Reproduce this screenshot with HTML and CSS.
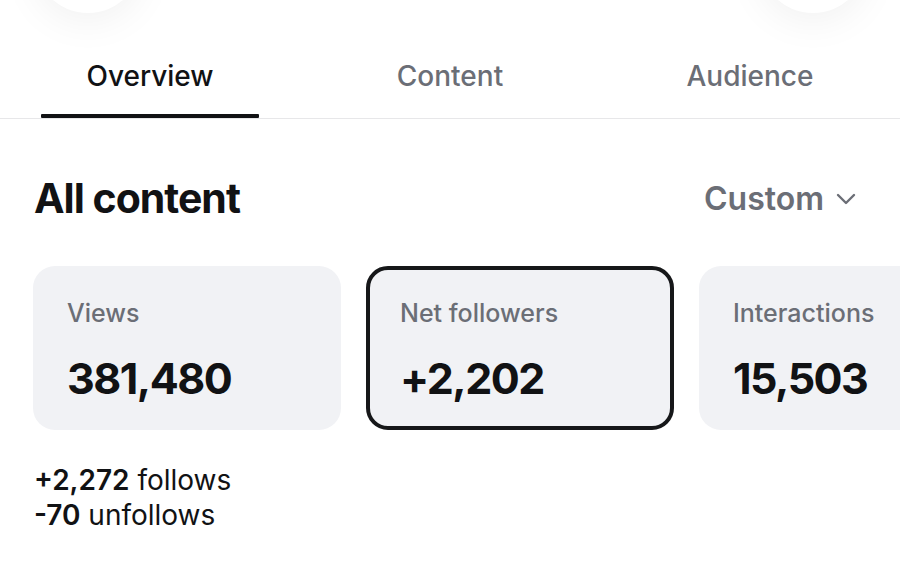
FILE: index.html
```
<!DOCTYPE html>
<html lang="en">
  <head>
    <meta charset="UTF-8" />
    <meta name="viewport" content="width=device-width, initial-scale=1.0" />
    <title>Insights</title>
    <link rel="stylesheet" href="styles.css">
  </head>
  <body>
    <div id="app">
      <div class="top-buttons">
        <div class="round-btn"></div>
        <div class="round-btn"></div>
      </div>

      <nav class="tabs">
        <div class="tab active">Overview</div>
        <div class="tab">Content</div>
        <div class="tab">Audience</div>
      </nav>

      <div class="section-head">
        <h1 class="section-title">All content</h1>
        <div class="range-picker">
          Custom
          <svg class="chevron" viewBox="0 0 20 12" width="20" height="12">
            <path d="M2 2 L10 10 L18 2" fill="none" stroke="currentColor" stroke-width="2.4" stroke-linecap="round" stroke-linejoin="round" />
          </svg>
        </div>
      </div>

      <div class="cards">
        <div class="card">
          <div class="card-label">Views</div>
          <div class="card-value">381,480</div>
        </div>
        <div class="card selected">
          <div class="card-label">Net followers</div>
          <div class="card-value">+2,202</div>
        </div>
        <div class="card">
          <div class="card-label">Interactions</div>
          <div class="card-value">15,503</div>
        </div>
      </div>

      <div class="breakdown">
        <p><strong>+2,272</strong> follows</p>
        <p><strong>-70</strong> unfollows</p>
      </div>
    </div>
  </body>
</html>
```

FILE: styles.css
```
* {
  box-sizing: border-box;
}
body {
  margin: 0;
  background-color: #ffffff;
  color: #111214;
  font-family: Inter, 'Noto Sans', sans-serif;
}
#app {
  width: 900px;
  height: 563px;
  overflow: hidden;
}
.top-buttons {
  display: flex;
  justify-content: space-between;
  padding: 0 33px 0 34px;
  margin-top: -95px;
}
.round-btn {
  width: 108px;
  height: 108px;
  border-radius: 50%;
  background-color: #ffffff;
  box-shadow: 0 8px 40px rgba(0, 0, 0, 0.06);
}
.tabs {
  display: grid;
  grid-template-columns: repeat(3, 1fr);
  border-bottom: 1px solid #e7e7e9;
}
.tab {
  display: flex;
  flex-direction: column;
  align-items: center;
  padding-top: 45px;
  font-size: 28px;
  font-weight: 500;
  line-height: 36px;
  color: #6b6e76;
}
.tab::after {
  content: '';
  display: block;
  width: 218px;
  height: 4px;
  margin-top: 20px;
  border-radius: 1px;
}
.tab.active {
  color: #111214;
}
.tab.active::after {
  background-color: #111214;
}
.section-head {
  display: flex;
  justify-content: space-between;
  align-items: center;
  padding: 0 44px 0 34px;
  margin-top: 54px;
  height: 50px;
}
.section-title {
  margin: 0;
  font-size: 41px;
  font-weight: 700;
  letter-spacing: -1px;
  line-height: 50px;
}
.range-picker {
  display: flex;
  align-items: center;
  gap: 12px;
  font-size: 32px;
  font-weight: 600;
  color: #6b6e76;
}
.chevron {
  margin-top: 2px;
}
.cards {
  display: flex;
  gap: 25px;
  padding-left: 33px;
  margin-top: 43px;
}
.card {
  flex: 0 0 308px;
  height: 164px;
  padding: 32px 34px;
  border-radius: 22px;
  background-color: #f1f2f5;
}
.card.selected {
  border: 4px solid #161719;
  padding: 28px 30px;
}
.card-label {
  font-size: 25px;
  font-weight: 500;
  line-height: 30px;
  color: #6b6e76;
}
.card-value {
  margin-top: 23px;
  font-size: 43px;
  font-weight: 700;
  letter-spacing: -1.5px;
  line-height: 54px;
}
.breakdown {
  margin-top: 33px;
  padding-left: 34px;
}
.breakdown p {
  margin: 0;
  font-size: 28px;
  line-height: 35px;
}
.breakdown strong {
  font-weight: 600;
}
```
